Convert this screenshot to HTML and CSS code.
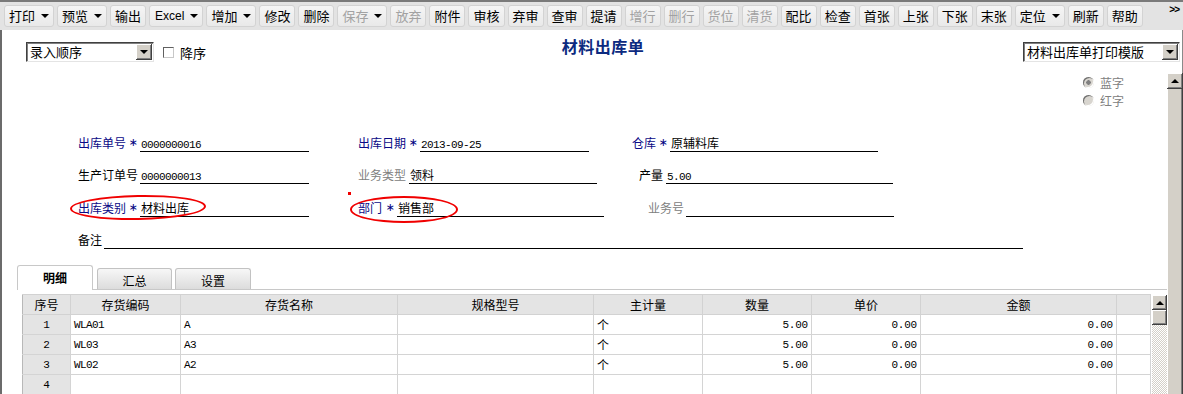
FILE: index.html
```html
<!DOCTYPE html>
<html>
<head>
  <meta charset="utf-8">
  <title>材料出库单</title>
  <link rel="stylesheet" href="styles.css">
</head>
<body>
  <div class="toolbar">
    <span class="tb">打印<i class="caret"></i></span>
    <span class="tb">预览<i class="caret"></i></span>
    <span class="tb">输出</span>
    <span class="tb excel">Excel<i class="caret"></i></span>
    <span class="tb">增加<i class="caret"></i></span>
    <span class="tb">修改</span>
    <span class="tb">删除</span>
    <span class="tb off">保存<i class="caret"></i></span>
    <span class="tb off">放弃</span>
    <span class="tb">附件</span>
    <span class="tb">审核</span>
    <span class="tb">弃审</span>
    <span class="tb">查审</span>
    <span class="tb">提请</span>
    <span class="tb off">增行</span>
    <span class="tb off">删行</span>
    <span class="tb off">货位</span>
    <span class="tb off">清货</span>
    <span class="tb">配比</span>
    <span class="tb">检查</span>
    <span class="tb">首张</span>
    <span class="tb">上张</span>
    <span class="tb">下张</span>
    <span class="tb">末张</span>
    <span class="tb">定位<i class="caret"></i></span>
    <span class="tb">刷新</span>
    <span class="tb">帮助</span>
    <span class="more">&gt;&gt;</span>
  </div>

  <div class="main">
    <div class="topbar">
      <div class="top-left">
        <div class="combo sort"><span class="combo-text">录入顺序</span><b class="drop"><i class="caret"></i></b></div>
        <label class="chk"><span class="box"></span>降序</label>
      </div>
      <h1 class="title">材料出库单</h1>
      <div class="top-right">
        <div class="combo tpl"><span class="combo-text">材料出库单打印模版</span><b class="drop"><i class="caret"></i></b></div>
      </div>
    </div>

    <div class="body">
      <div class="content">
        <div class="radios">
          <div class="radio"><span class="rd on"></span>蓝字</div>
          <div class="radio"><span class="rd"></span>红字</div>
        </div>

        <div class="form">
          <div class="frow">
            <div class="fld fa">
              <div class="cap cap62"><span class="navy">出库单号</span><span class="req">∗</span></div>
              <div class="val v169"><span class="mono">0000000016</span></div>
            </div>
            <div class="fld fb1">
              <div class="cap cap62"><span class="navy">出库日期</span><span class="req">∗</span></div>
              <div class="val v169"><span class="mono">2013-09-25</span></div>
            </div>
            <div class="fld">
              <div class="cap cap38"><span class="navy">仓库</span><span class="req">∗</span></div>
              <div class="val v208">原辅料库</div>
            </div>
          </div>

          <div class="frow">
            <div class="fld fa">
              <div class="cap cap62"><span>生产订单号</span></div>
              <div class="val v169"><span class="mono">0000000013</span></div>
            </div>
            <div class="fld fb2">
              <div class="cap cap51"><span class="grey">业务类型</span></div>
              <div class="val v188">领料</div>
            </div>
            <div class="fld">
              <div class="cap cap27"><span>产量</span></div>
              <div class="val v227"><span class="mono">5.00</span></div>
            </div>
          </div>

          <div class="frow tall">
            <span class="mark ring1"></span>
            <span class="mark ring2"></span>
            <span class="mark dot"></span>
            <div class="fld fa">
              <div class="cap cap62"><span class="navy">出库类别</span><span class="req">∗</span></div>
              <div class="val v169">材料出库</div>
            </div>
            <div class="fld fb3">
              <div class="cap cap39"><span class="navy">部门</span><span class="req">∗</span></div>
              <div class="val v207">销售部</div>
            </div>
            <div class="fld">
              <div class="cap cap38"><span class="grey">业务号</span></div>
              <div class="val v208"></div>
            </div>
          </div>

          <div class="frow">
            <div class="fld">
              <div class="cap cap26"><span>备注</span></div>
              <div class="val v919"></div>
            </div>
          </div>
        </div>

        <div class="tabs">
          <span class="tab active">明细</span>
          <span class="tab t2">汇总</span>
          <span class="tab t3">设置</span>
        </div>

        <div class="grid-wrap">
          <table class="grid">
            <colgroup>
              <col class="c-no"><col class="c-code"><col class="c-name"><col class="c-spec">
              <col class="c-unit"><col class="c-qty"><col class="c-price"><col class="c-amt"><col class="c-pad">
            </colgroup>
            <thead>
              <tr><th>序号</th><th>存货编码</th><th>存货名称</th><th>规格型号</th><th>主计量</th><th>数量</th><th>单价</th><th>金额</th><th></th></tr>
            </thead>
            <tbody>
              <tr><td class="no">1</td><td class="txt">WLA01</td><td class="txt">A</td><td></td><td class="cn">个</td><td class="num">5.00</td><td class="num">0.00</td><td class="num">0.00</td><td></td></tr>
              <tr><td class="no">2</td><td class="txt">WL03</td><td class="txt">A3</td><td></td><td class="cn">个</td><td class="num">5.00</td><td class="num">0.00</td><td class="num">0.00</td><td></td></tr>
              <tr><td class="no">3</td><td class="txt">WL02</td><td class="txt">A2</td><td></td><td class="cn">个</td><td class="num">5.00</td><td class="num">0.00</td><td class="num">0.00</td><td></td></tr>
              <tr><td class="no">4</td><td></td><td></td><td></td><td></td><td></td><td></td><td></td><td></td></tr>
            </tbody>
          </table>
          <div class="gscroll">
            <b class="sbtn"><i class="up"></i></b>
            <b class="gthumb"></b>
            <b class="gtrack"></b>
          </div>
        </div>
      </div>

      <div class="vscroll">
        <b class="sbtn big"><i class="up"></i></b>
        <b class="vthumb"></b>
      </div>
    </div>
  </div>
</body>
</html>
```

FILE: styles.css
```css
body {
  margin: 0;
  width: 1183px;
  height: 394px;
  overflow: hidden;
  background: #fff;
  color: #000;
  font-family: "Noto Sans CJK SC", "Liberation Sans", sans-serif;
  font-size: 12px;
}

/* toolbar */
.toolbar {
  height: 28px;
  border-top: 2px solid #7a7a7a;
  background: #e3e3e3;
  display: flex;
  align-items: center;
  gap: 3px;
  padding-left: 4px;
}

.tb {
  box-sizing: border-box;
  height: 22px;
  padding: 0 4px;
  display: flex;
  align-items: center;
  font-size: 13px;
  line-height: 22px;
  background: linear-gradient(#f5f5f5, #e9e9e9);
  border: 1px solid #d3d3d3;
  border-radius: 3px;
  white-space: nowrap;
}

.tb.excel {
  padding-left: 5px;
  font-family: "Liberation Sans", sans-serif;
  font-size: 12px;
}

.tb.off {
  color: #a2a2a2;
}

.caret {
  display: inline-block;
  width: 0;
  height: 0;
  border-left: 4px solid transparent;
  border-right: 4px solid transparent;
  border-top: 4px solid #000;
}

.tb .caret {
  margin-left: 6px;
}

.more {
  margin-left: auto;
  margin-right: 4px;
  align-self: flex-start;
  margin-top: 2px;
  font-family: "Liberation Sans", sans-serif;
  font-size: 10px;
  font-weight: bold;
  letter-spacing: -1px;
}

/* main frame */
.main {
  height: 364px;
  border-left: 2px solid #6b6b6b;
  border-right: 1px solid #8a8a8a;
}

.topbar {
  box-sizing: border-box;
  height: 43px;
  padding: 12px 2px 0 24px;
  display: grid;
  grid-template-columns: 1fr auto 1fr;
  align-items: start;
}

.top-left {
  display: flex;
  align-items: center;
}

.top-right {
  display: flex;
  justify-content: flex-end;
}

.title {
  margin: -5px 0 0;
  font-size: 16px;
  line-height: 18px;
  font-weight: bold;
  color: #0c2a80;
  letter-spacing: 0.5px;
}

.combo {
  box-sizing: border-box;
  height: 20px;
  display: flex;
  align-items: center;
  background: #fff;
  border: 1px solid;
  border-color: #404040 #e4e4e4 #e4e4e4 #404040;
  box-shadow: inset 1px 1px #808080;
  padding: 0 1px 0 3px;
}

.combo.sort {
  width: 128px;
}

.combo.tpl {
  width: 157px;
}

.combo-text {
  flex: 1;
  font-size: 13px;
  line-height: 18px;
}

.drop {
  box-sizing: border-box;
  width: 16px;
  height: 16px;
  display: flex;
  align-items: center;
  justify-content: center;
  background: #d4d0c8;
  box-shadow: inset -1px -1px #404040, inset 1px 1px #fff, inset -2px -2px #808080;
}

.chk {
  display: flex;
  align-items: center;
  margin-left: 9px;
  font-size: 13px;
}

.chk .box {
  box-sizing: border-box;
  width: 11px;
  height: 11px;
  margin-right: 6px;
  background: #fff;
  border: 1px solid;
  border-color: #606060 #c8c8c8 #c8c8c8 #606060;
}

/* body */
.body {
  display: flex;
  height: 321px;
}

.content {
  flex: 1;
}

.vscroll {
  width: 16px;
  display: flex;
  flex-direction: column;
  background: #d4d0c8;
}

.sbtn {
  box-sizing: border-box;
  width: 15px;
  height: 15px;
  display: flex;
  align-items: center;
  justify-content: center;
  background: #d4d0c8;
  box-shadow: inset -1px -1px #404040, inset 1px 1px #fff, inset -2px -2px #808080;
}

.sbtn.big {
  width: 16px;
  height: 16px;
}

.up {
  width: 0;
  height: 0;
  border-left: 4px solid transparent;
  border-right: 4px solid transparent;
  border-bottom: 4px solid #000;
}

.vthumb {
  flex: 1;
  background: #d4d0c8;
  box-shadow: inset -1px 0 #404040, inset 1px 0 #fff, inset -2px 0 #808080;
}

/* radios */
.radios {
  box-sizing: border-box;
  height: 47px;
  padding-right: 43px;
  display: flex;
  flex-direction: column;
  align-items: flex-end;
}

.radio {
  display: flex;
  align-items: center;
  height: 18px;
  color: #808080;
  font-size: 12px;
}

.rd {
  width: 11px;
  height: 11px;
  margin-right: 6px;
  border-radius: 50%;
  background: #d8d5cf;
  box-shadow: inset 1px 1px #707070, inset -1px -1px #fff;
}

.rd.on {
  background: radial-gradient(circle, #808080 0 2px, #d8d5cf 2.5px);
}

/* form */
.frow {
  position: relative;
  height: 32px;
  display: flex;
  align-items: flex-end;
  padding-left: 76px;
}

.frow.tall {
  height: 33px;
}

.fld {
  display: flex;
  align-items: flex-end;
}

.fa { width: 280px; }
.fb1 { width: 274px; }
.fb2 { width: 281px; }
.fb3 { width: 290px; }

.cap {
  display: flex;
  height: 16px;
  line-height: 16px;
  padding-bottom: 1px;
  white-space: nowrap;
}

.cap62 { width: 62px; }
.cap51 { width: 51px; }
.cap39 { width: 39px; }
.cap38 { width: 38px; }
.cap27 { width: 27px; }
.cap26 { width: 26px; }

.req {
  margin-left: auto;
  margin-right: 2px;
  color: #000080;
  font-family: "DejaVu Sans", sans-serif;
  font-size: 11px;
}

.navy { color: #0a0a86; }
.grey { color: #808080; }

.val {
  height: 16px;
  line-height: 16px;
  padding-left: 1px;
  border-bottom: 1px solid #000;
  white-space: nowrap;
  box-sizing: content-box;
}

.v169 { width: 168px; }
.v188 { width: 187px; }
.v207 { width: 206px; }
.v208 { width: 207px; }
.v227 { width: 226px; }
.v919 { width: 918px; }

.mono {
  font-family: "Liberation Mono", monospace;
  font-size: 11px;
  letter-spacing: -0.6px;
}

.mark {
  position: absolute;
  box-sizing: border-box;
}

.ring1 {
  left: 68px;
  top: 11px;
  width: 136px;
  height: 25px;
  border: 2px solid #f00000;
  border-radius: 50%;
  transform: rotate(-1deg);
}

.ring2 {
  left: 348px;
  top: 12px;
  width: 108px;
  height: 27px;
  border: 2px solid #f00000;
  border-radius: 50%;
}

.dot {
  left: 346px;
  top: 8px;
  width: 3px;
  height: 3px;
  background: #f00000;
}

/* tabs */
.tabs {
  height: 24px;
  margin: 16px 0 0 15px;
  display: flex;
  align-items: flex-end;
  border-bottom: 1px solid #c8c8c8;
}

.tab {
  box-sizing: border-box;
  display: flex;
  align-items: center;
  justify-content: center;
  font-size: 12px;
}

.tab.active {
  width: 76px;
  height: 25px;
  margin-bottom: -1px;
  background: #fff;
  border: 1px solid #c8c8c8;
  border-bottom: none;
  border-radius: 3px 3px 0 0;
  font-weight: bold;
  padding-bottom: 2px;
}

.tab.t2,
.tab.t3 {
  height: 21px;
  padding-top: 3px;
  background: linear-gradient(#f7f7f7, #dcdcdc);
  border: 1px solid #c2c2c2;
  border-bottom: none;
  border-radius: 3px 3px 0 0;
}

.tab.t2 {
  width: 75px;
  margin-left: 4px;
}

.tab.t3 {
  width: 76px;
  margin-left: 3px;
}

/* grid */
.grid-wrap {
  display: flex;
  margin-left: 20px;
  padding-top: 4px;
}

.grid {
  width: 1128px;
  border-collapse: collapse;
  table-layout: fixed;
}

.c-no { width: 48px; }
.c-code { width: 110px; }
.c-name { width: 217px; }
.c-spec { width: 196px; }
.c-unit { width: 109px; }
.c-qty { width: 109px; }
.c-price { width: 109px; }
.c-amt { width: 196px; }
.c-pad { width: 34px; }

.grid th,
.grid td {
  height: 19px;
  padding: 0 3px;
  border: 1px solid #d4d4d4;
  line-height: 18px;
  white-space: nowrap;
  overflow: hidden;
}

.grid th {
  background: #e4e4e4;
  font-weight: normal;
  font-size: 12px;
  border-color: #d2d2d2;
}

.grid th:first-child,
.grid td:first-child {
  border-left-color: #b8b8b8;
}

.grid td.no {
  background: #e4e4e4;
  text-align: center;
  font-family: "Liberation Mono", monospace;
  font-size: 11px;
}

.grid td.txt {
  font-family: "Liberation Mono", monospace;
  font-size: 11px;
  letter-spacing: -0.6px;
}

.grid td.num {
  text-align: right;
  font-family: "Liberation Mono", monospace;
  font-size: 11px;
  letter-spacing: -0.2px;
}

.grid td.cn {
  font-size: 12px;
}

.gscroll {
  width: 16px;
  display: flex;
  flex-direction: column;
  padding-top: 1px;
  padding-left: 1px;
  box-sizing: border-box;
}

.gthumb {
  width: 15px;
  height: 15px;
  background: #d4d0c8;
  box-shadow: inset -1px -1px #404040, inset 1px 1px #fff, inset -2px -2px #808080;
}

.gtrack {
  width: 15px;
  flex: 1;
  height: 80px;
  background: repeating-conic-gradient(#ffffff 0 25%, #d4d0c8 0 50%) 0 0 / 2px 2px;
}
```
